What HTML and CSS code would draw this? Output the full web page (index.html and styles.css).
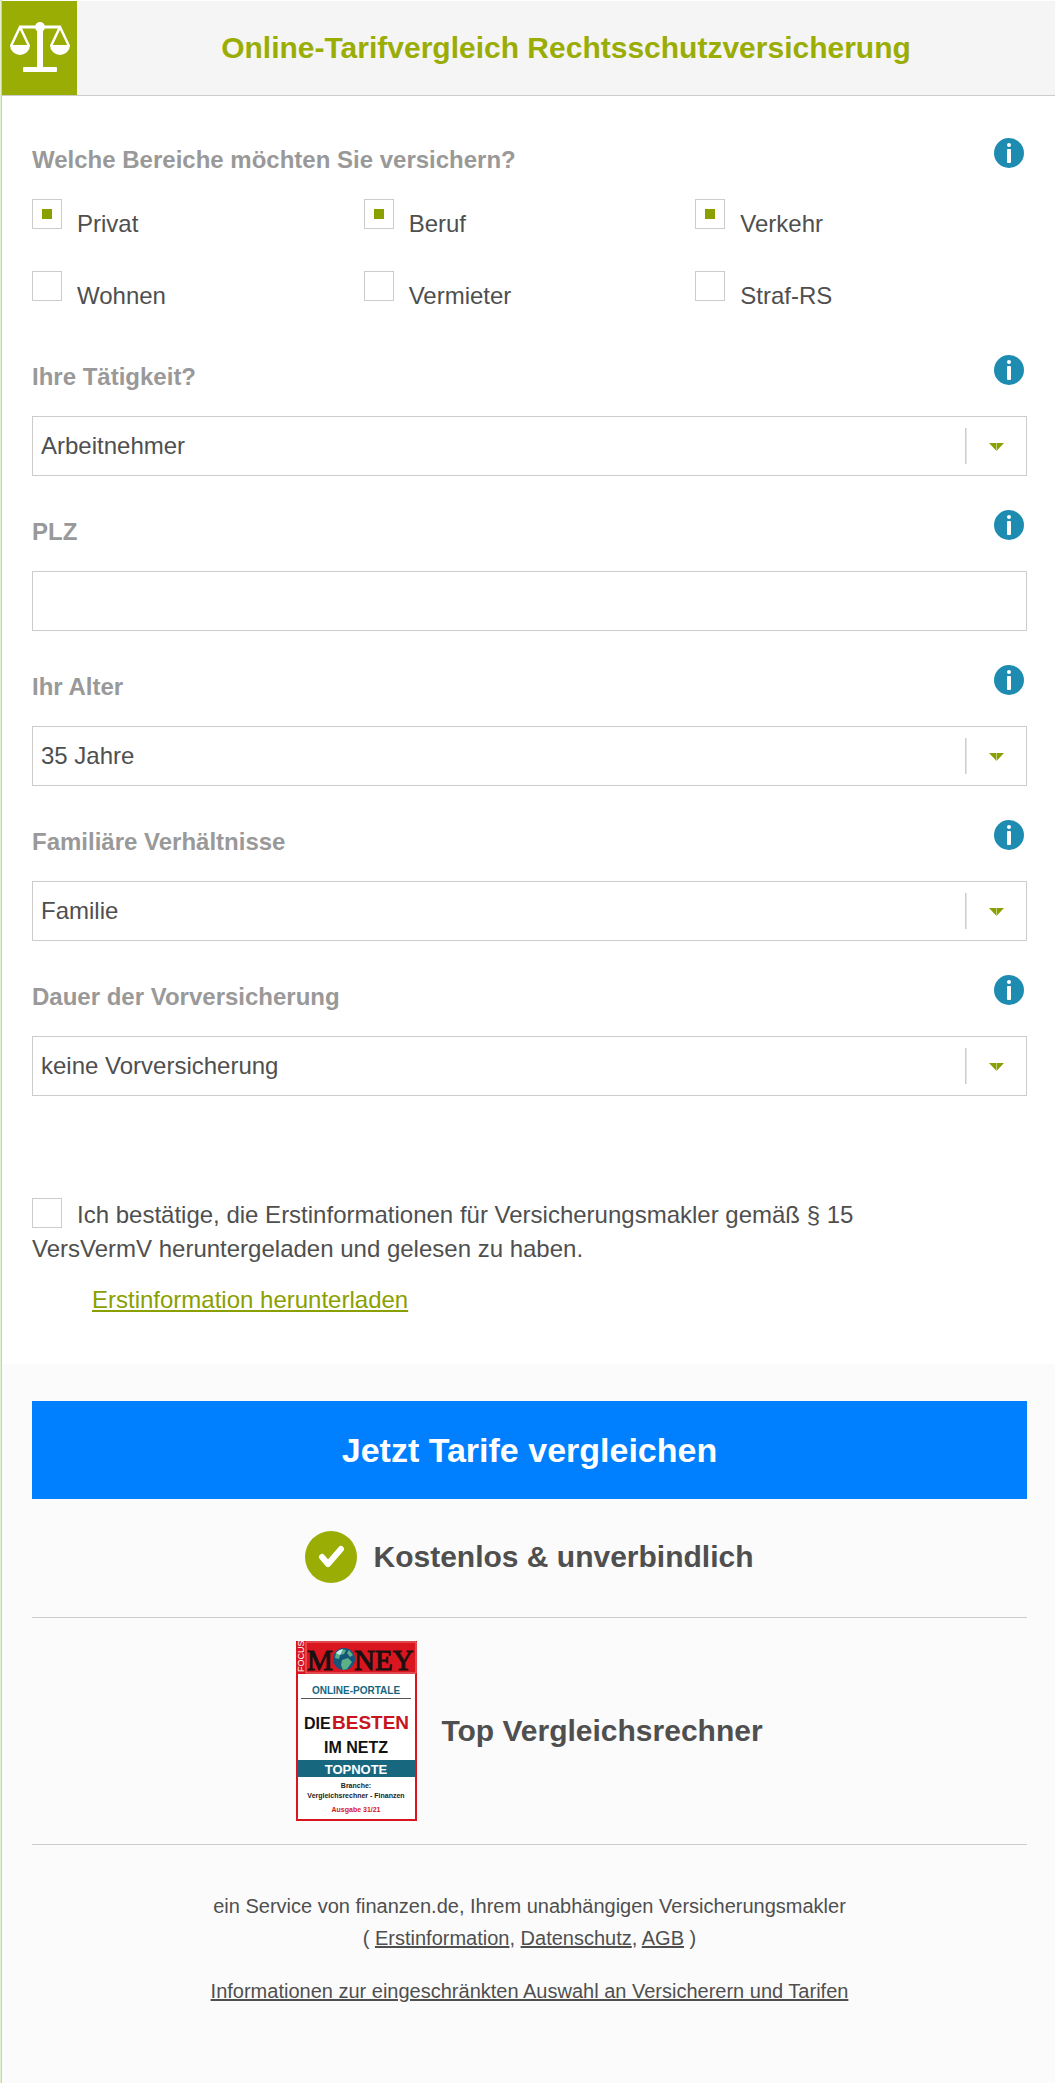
FILE: index.html
```html
<!DOCTYPE html>
<html lang="de">
<head>
	<meta charset="utf-8">
	<meta name="viewport" content="width=device-width, initial-scale=1">
	<title>Online-Tarifvergleich Rechtsschutzversicherung</title>
	<link rel="stylesheet" href="styles.css">
</head>
<body>
	<svg class="sprite" aria-hidden="true">
		<symbol id="info" viewBox="0 0 30 30">
			<circle cx="15" cy="15" r="15" fill="#1e8bb1"/>
			<circle cx="15" cy="7" r="2" fill="#fff"/>
			<rect x="13" y="11" width="4" height="14" rx="1" fill="#fff"/>
		</symbol>
		<symbol id="arrow" viewBox="0 0 40 36">
			<path d="M0 0h1v36H0z" fill="#ccc"/>
			<path d="M1 0h1v36H1z" fill="#e4e4e4"/>
			<path d="M24 15h15l-7.500 8z" fill="#8a9f00"/>
			<path d="M31 15h1v8h-1z" fill="#c5cf80"/>
		</symbol>
	</svg>

	<form class="calculator">
		<header class="header">
			<div class="header-icon">
				<svg width="60" height="50" viewBox="0 0 60 50" aria-hidden="true">
					<g fill="none" stroke="#fff" stroke-width="2">
						<path d="M9 5H51" stroke-width="3"/>
						<path d="M10 5L1 24M10 5L19 24M50 5L41 24M50 5L59 24" stroke-width="2.500"/>
					</g>
					<g fill="#fff">
						<circle cx="30" cy="5" r="5"/>
						<path d="M27 4h6v42h-6z"/>
						<path d="M0 23h20a10 10 0 0 1-20 0zM40 23h20a10 10 0 0 1-20 0z"/>
						<rect x="13" y="45" width="34" height="5" rx="1"/>
					</g>
				</svg>
			</div>
			<h1>Online-Tarifvergleich Rechtsschutzversicherung</h1>
		</header>

		<div class="fields">
			<div class="field" role="group" aria-labelledby="bereiche">
				<div class="field-head">
					<span class="field-label" id="bereiche">Welche Bereiche möchten Sie versichern?</span>
					<button type="button" class="info" aria-label="Info"><svg><use href="#info"/></svg></button>
				</div>
				<div class="areas">
					<label><input type="checkbox" checked>Privat</label>
					<label><input type="checkbox" checked>Beruf</label>
					<label><input type="checkbox" checked>Verkehr</label>
					<label><input type="checkbox">Wohnen</label>
					<label><input type="checkbox">Vermieter</label>
					<label><input type="checkbox">Straf-RS</label>
				</div>
			</div>

			<div class="field">
				<div class="field-head">
					<label class="field-label" for="taetigkeit">Ihre Tätigkeit?</label>
					<button type="button" class="info" aria-label="Info"><svg><use href="#info"/></svg></button>
				</div>
				<div class="select">
					<select id="taetigkeit"><option>Arbeitnehmer</option></select>
					<svg><use href="#arrow"/></svg>
				</div>
			</div>

			<div class="field">
				<div class="field-head">
					<label class="field-label" for="plz">PLZ</label>
					<button type="button" class="info" aria-label="Info"><svg><use href="#info"/></svg></button>
				</div>
				<input type="text" id="plz" name="plz">
			</div>

			<div class="field">
				<div class="field-head">
					<label class="field-label" for="alter">Ihr Alter</label>
					<button type="button" class="info" aria-label="Info"><svg><use href="#info"/></svg></button>
				</div>
				<div class="select">
					<select id="alter"><option>35 Jahre</option></select>
					<svg><use href="#arrow"/></svg>
				</div>
			</div>

			<div class="field">
				<div class="field-head">
					<label class="field-label" for="familie">Familiäre Verhältnisse</label>
					<button type="button" class="info" aria-label="Info"><svg><use href="#info"/></svg></button>
				</div>
				<div class="select">
					<select id="familie"><option>Familie</option></select>
					<svg><use href="#arrow"/></svg>
				</div>
			</div>

			<div class="field">
				<div class="field-head">
					<label class="field-label" for="vorversicherung">Dauer der Vorversicherung</label>
					<button type="button" class="info" aria-label="Info"><svg><use href="#info"/></svg></button>
				</div>
				<div class="select">
					<select id="vorversicherung"><option>keine Vorversicherung</option></select>
					<svg><use href="#arrow"/></svg>
				</div>
			</div>

			<div class="confirm">
				<label><input type="checkbox" name="bestaetigung">Ich bestätige, die Erstinformationen für Versicherungsmakler gemäß § 15<br>VersVermV heruntergeladen und gelesen zu haben.</label>
				<a href="#" class="download">Erstinformation herunterladen</a>
			</div>
		</div>

		<div class="bottom">
			<button type="submit" class="btn">Jetzt Tarife vergleichen</button>

			<div class="free">
				<svg width="52" height="52" viewBox="0 0 52 52" aria-hidden="true">
					<circle cx="26" cy="26" r="26" fill="#9aad05"/>
					<path d="M17 26L23 33L36 18" fill="none" stroke="#fff" stroke-width="6" stroke-linecap="round" stroke-linejoin="round"/>
				</svg>
				<strong>Kostenlos &amp; unverbindlich</strong>
			</div>

			<div class="award">
				<svg class="seal" width="121" height="180" viewBox="0 0 121 180">
					<path d="M0 0h121v180H0z" fill="#d9161f"/>
					<path d="M2 33h117v145H2z" fill="#fff"/>
					<path d="M2 119h117v17H2z" fill="#17677f"/>
					<path d="M10 1h110v31H10z" fill="none" stroke="#e9777b"/>
					<path d="M5 57h110v1H5z" fill="#555"/>
					<text class="seal-focus" transform="translate(8 31) rotate(-90)">FOCUS</text>
					<g class="seal-money">
						<text x="11" y="29">M</text>
						<text x="58" y="29">NEY</text>
					</g>
					<circle cx="48" cy="18" r="11" fill="#14567c"/>
					<path d="M40 12c3-4 8-4 10-3l-2 4-4 1-1 4-4-1zM46 19l6-2 4 4-5 7-4 1-2-5zM53 9l4 5-3 2-3-4z" fill="#5cb088"/>
					<path d="M40 12a11 11 0 0 1 7-4l-3 6z" fill="#c6eaf0"/>
					<g text-anchor="middle">
						<text class="seal-portale" x="60" y="53">ONLINE-PORTALE</text>
						<text class="seal-netz" x="60" y="112">IM NETZ</text>
						<text class="seal-topnote" x="60" y="133">TOPNOTE</text>
						<text class="seal-small" x="60" y="147">Branche:</text>
						<text class="seal-small" x="60" y="157">Vergleichsrechner - Finanzen</text>
						<text class="seal-small seal-red" x="60" y="171">Ausgabe 31/21</text>
					</g>
					<text class="seal-netz" x="8" y="88">DIE</text>
					<text class="seal-besten" x="36" y="88">BESTEN</text>
				</svg>
				<strong>Top Vergleichsrechner</strong>
			</div>

			<footer class="footer">
				<p>ein Service von finanzen.de, Ihrem unabhängigen Versicherungsmakler<br>
				( <a href="#">Erstinformation</a>, <a href="#">Datenschutz</a>, <a href="#">AGB</a> )</p>
				<p><a href="#">Informationen zur eingeschränkten Auswahl an Versicherern und Tarifen</a></p>
			</footer>
		</div>
	</form>
</body>
</html>
```
FILE: styles.css
```css
* {
	box-sizing: border-box;
}

body {
	margin: 0;
	border-left: 1px solid #e2efd0;
	font-family: "Liberation Sans", Arial, sans-serif;
	font-size: 24px;
	line-height: 34px;
	color: #4f4f4f;
	background-color: #fff;
}

.sprite {
	display: none;
}

.calculator {
	border-left: 1px solid #ccc;
	padding-top: 1px;
}

/* header */
.header {
	display: flex;
	border-bottom: 1px solid #ccc;
	background-color: #f5f5f5;
}

.header-icon {
	display: flex;
	justify-content: center;
	width: 75px;
	height: 94px;
	padding-top: 21px;
	background-color: #9aad05;
}

.header h1 {
	flex: 1;
	margin: 0;
	font-size: 30px;
	line-height: 94px;
	text-align: center;
	color: #9aad05;
}

/* form fields */
.fields {
	padding: 42px 28px 47px 30px;
}

.field {
	margin-bottom: 34px;
}

.field-head {
	display: flex;
	justify-content: space-between;
	height: 44px;
	margin-bottom: 17px;
	padding-right: 3px;
}

.field-label {
	font-weight: bold;
	line-height: 44px;
	color: #999;
}

.info {
	width: 30px;
	height: 30px;
	padding: 0;
	border: none;
	background: none;
	cursor: pointer;
}

.info svg {
	display: block;
	width: 30px;
	height: 30px;
}

.areas {
	display: grid;
	grid-template-columns: repeat(3, 1fr);
	row-gap: 22px;
}

.areas label {
	line-height: 50px;
}

input[type="checkbox"] {
	float: left;
	display: grid;
	place-items: center;
	width: 30px;
	height: 30px;
	margin: 0 15px 0 0;
	border: 1px solid #ccc;
	background-color: #fff;
	appearance: none;
}

input[type="checkbox"]:checked::before {
	content: "";
	width: 10px;
	height: 10px;
	background-color: #8a9f00;
}

input[type="text"],
select {
	display: block;
	width: 100%;
	height: 60px;
	padding: 0 8px 2px;
	border: 1px solid #ccc;
	border-radius: 0;
	font-family: inherit;
	font-size: 24px;
	color: #4f4f4f;
	background-color: #fff;
	appearance: none;
}

.select {
	position: relative;
}

.select svg {
	position: absolute;
	top: 12px;
	right: 22px;
	width: 40px;
	height: 36px;
	pointer-events: none;
}

.confirm {
	margin-top: 102px;
}

.confirm label {
	display: block;
	margin-bottom: 17px;
}

.download {
	display: block;
	margin-left: 60px;
	color: #8a9f00;
}

/* button and trust elements */
.bottom {
	padding: 37px 28px 76px 30px;
	background-color: #fbfbfb;
}

.btn {
	display: block;
	width: 100%;
	height: 98px;
	border: none;
	font-family: inherit;
	font-size: 34px;
	font-weight: bold;
	color: #fff;
	background-color: #007fff;
	cursor: pointer;
}

.free,
.award {
	display: flex;
	justify-content: center;
	align-items: center;
	border-bottom: 1px solid #ccc;
	font-size: 30px;
}

.free {
	gap: 16px;
	padding: 32px 0 34px;
}

.award {
	gap: 24px;
	padding: 23px 0;
}

.seal {
	font-weight: bold;
}

.seal-focus {
	font-size: 9px;
	font-weight: normal;
	fill: #fff;
}

.seal-money {
	font-family: "Liberation Serif", serif;
	font-size: 29px;
	font-weight: normal;
	fill: #1b1010;
	stroke: #1b1010;
}

.seal-portale {
	font-size: 10px;
	fill: #17677f;
}

.seal-netz {
	font-size: 16px;
	fill: #111;
}

.seal-besten {
	font-size: 19px;
	fill: #c8141c;
}

.seal-topnote {
	font-size: 13px;
	fill: #fff;
}

.seal-small {
	font-size: 7px;
	fill: #222;
}

.seal-red {
	fill: #d9161f;
}

.footer {
	padding-top: 45px;
	font-size: 20px;
	line-height: 32px;
	text-align: center;
}

.footer p {
	margin: 0;
}

.footer p + p {
	margin-top: 21px;
}

.footer a {
	color: inherit;
}
```
